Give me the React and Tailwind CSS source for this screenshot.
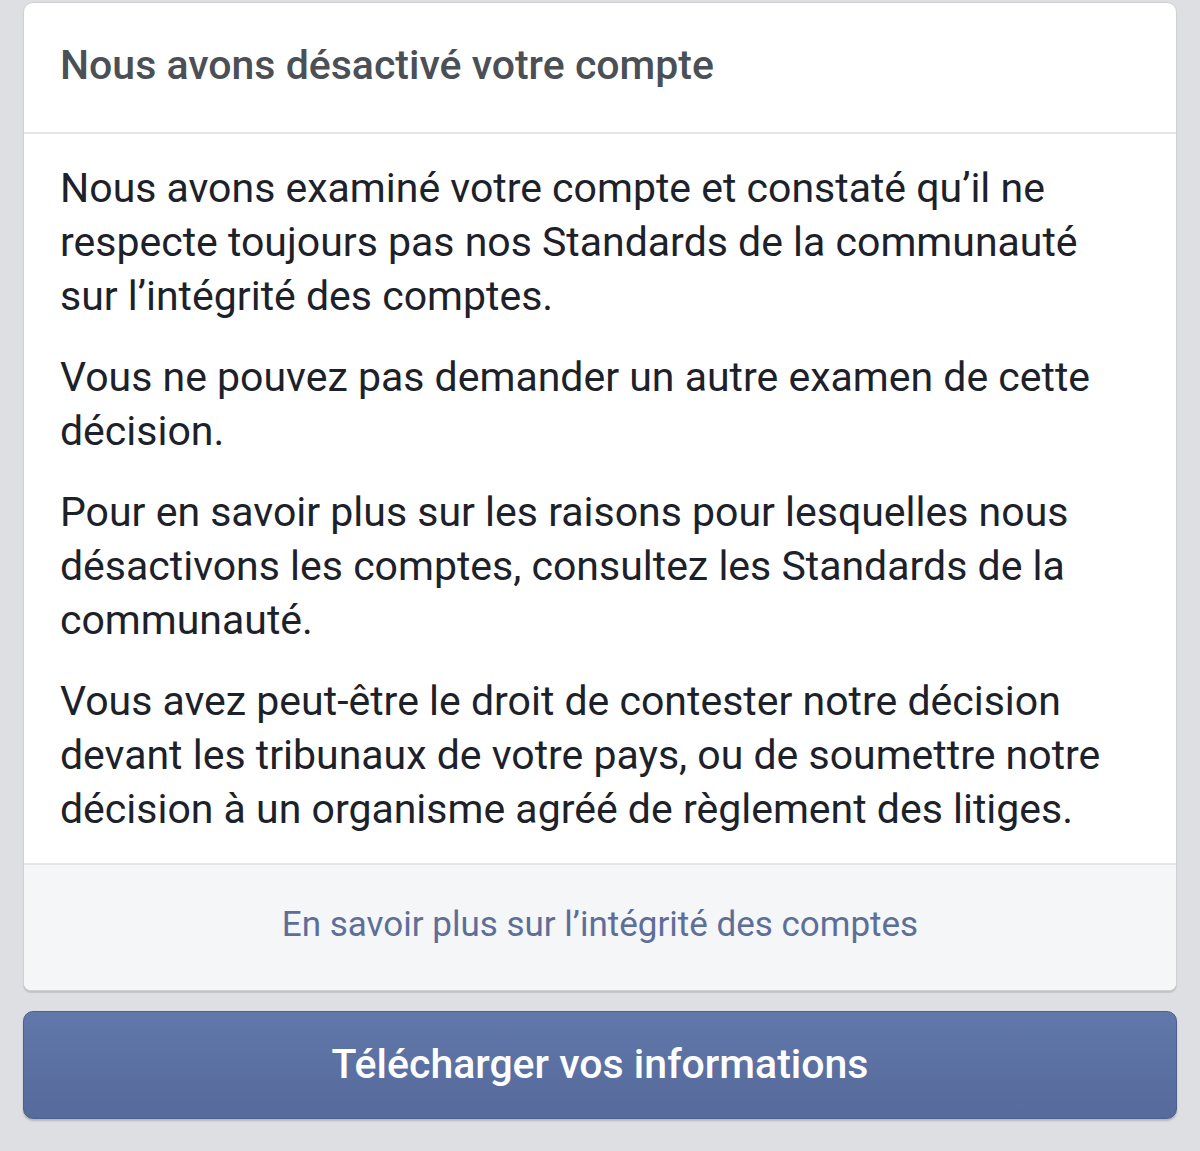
import React from 'react';

const paragraphs = [
  "Nous avons examiné votre compte et constaté qu’il ne respecte toujours pas nos Standards de la communauté sur l’intégrité des comptes.",
  "Vous ne pouvez pas demander un autre examen de cette décision.",
  "Pour en savoir plus sur les raisons pour lesquelles nous désactivons les comptes, consultez les Standards de la communauté.",
  "Vous avez peut-être le droit de contester notre décision devant les tribunaux de votre pays, ou de soumettre notre décision à un organisme agréé de règlement des litiges.",
];

export default function App() {
  return (
    <div className="min-h-[1151px] bg-[#dddfe2] px-[23px] pt-[2px] pb-8 font-['Roboto',sans-serif]">
      <div className="bg-white rounded-t-[10px] rounded-b-[8px] border border-[#cfd1d5] shadow-[0_2px_1px_rgba(0,0,0,0.12)] overflow-hidden">
        <div className="h-[131px] flex items-center px-[36px] border-b-2 border-[#e5e6e9]">
          <h1 className="text-[41px] font-medium text-[#4b4f56] leading-none pb-1">Nous avons désactivé votre compte</h1>
        </div>
        <div className="px-[36px] pt-[27px] pb-[27px] flex flex-col gap-[27px] border-b-2 border-[#e5e6e9]">
          {paragraphs.map((p, i) => (
            <p key={i} className="text-[41px] leading-[54px] text-[#1d2129]">{p}</p>
          ))}
        </div>
        <div className="h-[125px] bg-[#f5f6f7] flex items-center justify-center">
          <span className="text-[35px] text-[#5d6f98] pb-1">En savoir plus sur l’intégrité des comptes</span>
        </div>
      </div>
      <button className="mt-[20px] w-full h-[108px] rounded-[10px] border border-[#4c5f8f] bg-gradient-to-b from-[#6178aa] to-[#566a9b] shadow-[0_2px_2px_rgba(0,0,0,0.18)] text-white text-[41px] font-medium">
        Télécharger vos informations
      </button>
    </div>
  );
}
